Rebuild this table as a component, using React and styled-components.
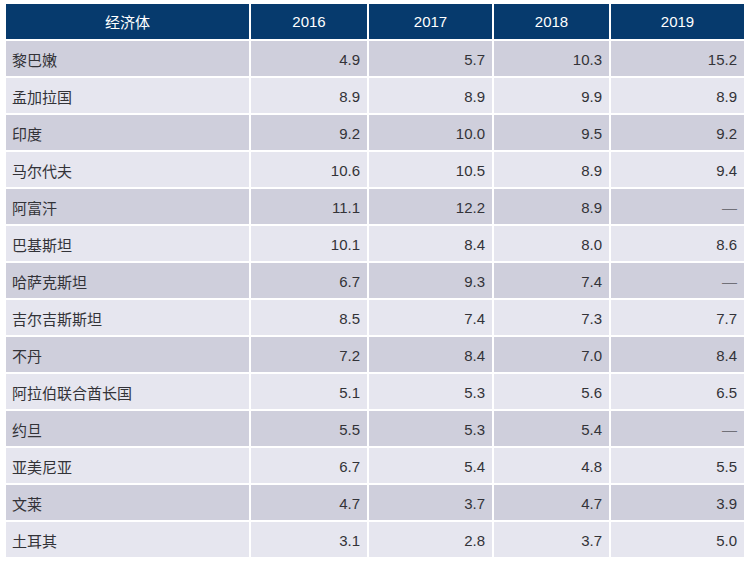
import React from "react";
import styled, { createGlobalStyle } from "styled-components";

const Global = createGlobalStyle`
  html, body { margin: 0; padding: 0; background: #ffffff; }
  body {
    font-family: "Liberation Sans", "Noto Sans CJK SC", sans-serif;
    -webkit-font-smoothing: antialiased;
  }
`;

const Page = styled.div`
  padding: 4px 8px 8px 6px;
`;

const Table = styled.div`
  display: grid;
  grid-template-columns: 243px 116px 123px 115px 133px;
  grid-template-rows: 35px;
  grid-auto-rows: 35px;
  gap: 2px;
  width: 738px;
`;

const HeadCell = styled.div`
  background: #063a6d;
  color: #ffffff;
  font-size: 15px;
  display: flex;
  align-items: center;
  justify-content: center;
`;

const Cell = styled.div`
  background: ${(p) => (p.$dark ? "#cfcfdc" : "#e6e6ef")};
  color: ${(p) => (p.$muted ? "#707078" : "#333338")};
  font-size: 15px;
  display: flex;
  align-items: center;
  justify-content: ${(p) => (p.$num ? "flex-end" : "flex-start")};
  padding: ${(p) => (p.$num ? "1px 7px 0 0" : "1px 0 0 6px")};
`;

const headers = ["经济体", "2016", "2017", "2018", "2019"];

const rows = [
  ["黎巴嫩", "4.9", "5.7", "10.3", "15.2"],
  ["孟加拉国", "8.9", "8.9", "9.9", "8.9"],
  ["印度", "9.2", "10.0", "9.5", "9.2"],
  ["马尔代夫", "10.6", "10.5", "8.9", "9.4"],
  ["阿富汗", "11.1", "12.2", "8.9", "—"],
  ["巴基斯坦", "10.1", "8.4", "8.0", "8.6"],
  ["哈萨克斯坦", "6.7", "9.3", "7.4", "—"],
  ["吉尔吉斯斯坦", "8.5", "7.4", "7.3", "7.7"],
  ["不丹", "7.2", "8.4", "7.0", "8.4"],
  ["阿拉伯联合酋长国", "5.1", "5.3", "5.6", "6.5"],
  ["约旦", "5.5", "5.3", "5.4", "—"],
  ["亚美尼亚", "6.7", "5.4", "4.8", "5.5"],
  ["文莱", "4.7", "3.7", "4.7", "3.9"],
  ["土耳其", "3.1", "2.8", "3.7", "5.0"],
];

export default function App() {
  return (
    <>
      <Global />
      <Page>
        <Table>
          {headers.map((h) => (
            <HeadCell key={h}>{h}</HeadCell>
          ))}
          {rows.map((r, i) =>
            r.map((v, j) => (
              <Cell
                key={`${i}-${j}`}
                $dark={i % 2 === 0}
                $num={j > 0}
                $muted={v === "—"}
              >
                {v}
              </Cell>
            ))
          )}
        </Table>
      </Page>
    </>
  );
}
